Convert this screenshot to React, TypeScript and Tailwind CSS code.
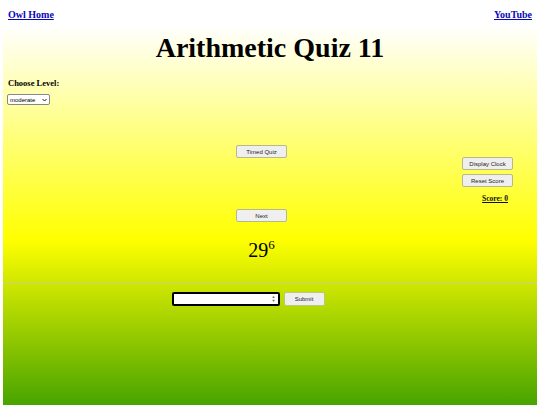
import React from "react";

const btn =
  "h-[13px] w-[51px] bg-[#efefef] border border-[#b8b890] rounded-[2px] text-[6px] leading-none text-[#222] flex items-center justify-center";

export default function App() {
  return (
    <div className="w-[540px] h-[405px] overflow-hidden bg-white px-[3px]">
      <div
        className="h-full w-full bg-[linear-gradient(to_bottom,#ffffff_0px,#ffffff_25px,#ffff00_240px,#008000_470px)] flex flex-col"
        style={{ fontFamily: '"Liberation Serif", serif' }}
      >
        <div className="flex justify-between px-[5px] pt-[8px] text-[10px] font-bold leading-[14px]">
          <a className="text-[#0808b8] underline">Owl Home</a>
          <a className="text-[#0808b8] underline">YouTube</a>
        </div>
        <h1 className="mt-[10px] text-center text-[28px] font-bold leading-[32px] text-black">
          Arithmetic Quiz 11
        </h1>
        <div className="mt-[13px] pl-[5px] text-[8.5px] font-bold leading-[13px] text-black">
          Choose Level:
        </div>
        <div className="mt-[4px] pl-[4px]">
          <div
            className="h-[11px] w-[43px] bg-white border border-[#888] rounded-[2px] flex items-center justify-between px-[2px]"
            style={{ fontFamily: '"Liberation Sans", sans-serif' }}
          >
            <span className="text-[6px] leading-none text-black">moderate</span>
            <svg width="5" height="4" viewBox="0 0 10 8">
              <path d="M1 2 L5 6 L9 2" stroke="#222" strokeWidth="2" fill="none" />
            </svg>
          </div>
        </div>
        <div
          className="mt-[40px] flex"
          style={{ fontFamily: '"Liberation Sans", sans-serif' }}
        >
          <div className="w-[517px] flex flex-col items-center">
            <div className={btn}>Timed Quiz</div>
          </div>
        </div>
        <div
          className="flex justify-end pr-[24px] mt-[-1px]"
          style={{ fontFamily: '"Liberation Sans", sans-serif' }}
        >
          <div className="flex flex-col items-end gap-[4px]">
            <div className={btn}>Display Clock</div>
            <div className={btn}>Reset Score</div>
          </div>
        </div>
        <div className="flex justify-end pr-[29px] mt-[7px]">
          <span className="text-[7.5px] font-bold underline leading-[10px] text-[#111]">
            Score: 0
          </span>
        </div>
        <div
          className="mt-[5px] flex justify-center w-[517px]"
          style={{ fontFamily: '"Liberation Sans", sans-serif' }}
        >
          <div className={btn}>Next</div>
        </div>
        <div className="mt-[16px] w-[517px] flex justify-center text-[20px] leading-[24px] text-black">
          <span>
            29<sup className="text-[13px] top-[-8px]">6</sup>
          </span>
        </div>
        <div className="mt-[21px] h-[2px] border-t border-[#d0d080] border-b-[#eef0a0]" />
        <div
          className="mt-[7px] flex justify-center gap-[4px] w-[490px]"
          style={{ fontFamily: '"Liberation Sans", sans-serif' }}
        >
          <div className="h-[14px] w-[108px] bg-white border-2 border-black rounded-[2px] flex items-center justify-end pr-[2px]">
            <div className="flex flex-col items-center leading-none">
              <span className="text-[4px] text-[#666]">▲</span>
              <span className="text-[4px] text-[#666]">▼</span>
            </div>
          </div>
          <div className="h-[14px] w-[41px] bg-[#efefef] border border-[#b8c880] rounded-[2px] text-[6px] text-[#222] flex items-center justify-center">
            Submit
          </div>
        </div>
      </div>
    </div>
  );
}
